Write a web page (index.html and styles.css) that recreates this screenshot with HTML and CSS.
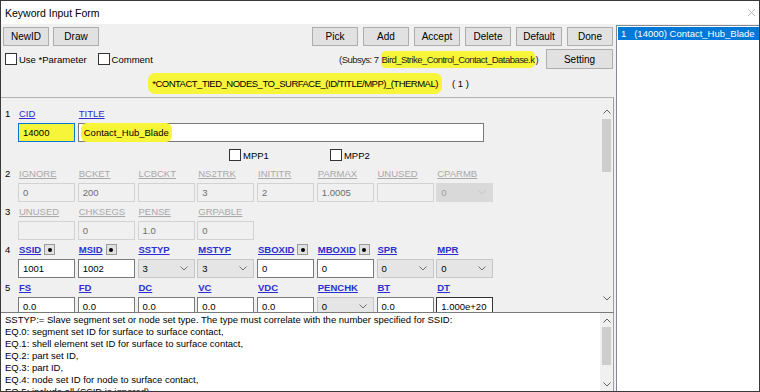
FILE: index.html
```html
<!DOCTYPE html>
<html lang="en">
<head>
<meta charset="UTF-8" />
<title>Keyword Input Form</title>
<link rel="stylesheet" href="styles.css">
</head>
<body>
<div class="window">
  <div class="titlebar">
    <span>Keyword Input Form</span>
    <svg class="close" width="9" height="9" viewBox="0 0 9 9"><path d="M1 1L8 8M8 1L1 8" stroke="#b8b8b8" stroke-width="1"/></svg>
  </div>

  <div class="content">
    <div class="main">
      <div class="toolbar">
        <div class="btn-group">
          <button class="btn">NewID</button>
          <button class="btn">Draw</button>
        </div>
        <div class="btn-group">
          <button class="btn">Pick</button>
          <button class="btn">Add</button>
          <button class="btn">Accept</button>
          <button class="btn">Delete</button>
          <button class="btn">Default</button>
          <button class="btn">Done</button>
        </div>
      </div>

      <div class="optrow">
        <label class="check use-param"><span class="cbox"></span>Use *Parameter</label>
        <label class="check"><span class="cbox"></span>Comment</label>
        <span class="subsys">(Subsys: 7 <span class="mark">Bird_Strike_Control_Contact_Database.k</span>)</span>
        <button class="btn btn-setting">Setting</button>
      </div>

      <div class="keyword">
        <span class="mark kw">*CONTACT_TIED_NODES_TO_SURFACE_(ID/TITLE/MPP)_(THERMAL)</span>
        <span class="count">( 1 )</span>
      </div>

      <div class="form">
        <div class="cards">
          <div class="row">
            <span class="num">1</span>
            <div class="fields">
              <div class="field">
                <div class="lbl"><span class="key">CID</span></div>
                <div class="box focus mark-box">14000</div>
              </div>
              <div class="field wide">
                <div class="lbl"><span class="key">TITLE</span></div>
                <div class="box"><span class="mark title-mark">Contact_Hub_Blade</span></div>
              </div>
            </div>
          </div>

          <div class="mpprow">
            <label class="check mpp1"><span class="cbox"></span>MPP1</label>
            <label class="check mpp2"><span class="cbox"></span>MPP2</label>
          </div>

          <div class="row">
            <span class="num">2</span>
            <div class="fields">
              <div class="field"><div class="lbl"><span class="key off">IGNORE</span></div><div class="box off">0</div></div>
              <div class="field"><div class="lbl"><span class="key off">BCKET</span></div><div class="box off">200</div></div>
              <div class="field"><div class="lbl"><span class="key off">LCBCKT</span></div><div class="box off"></div></div>
              <div class="field"><div class="lbl"><span class="key off">NS2TRK</span></div><div class="box off">3</div></div>
              <div class="field"><div class="lbl"><span class="key off">INITITR</span></div><div class="box off">2</div></div>
              <div class="field"><div class="lbl"><span class="key off">PARMAX</span></div><div class="box off">1.0005</div></div>
              <div class="field"><div class="lbl"><span class="key off">UNUSED</span></div><div class="box off"></div></div>
              <div class="field"><div class="lbl"><span class="key off">CPARMB</span></div>
                <div class="box select off-select">0<svg class="chev" width="8" height="5" viewBox="0 0 8 5"><path d="M0.5 0.5L4 4L7.5 0.5" fill="none" stroke="#c4c4c4"/></svg></div>
              </div>
            </div>
          </div>

          <div class="row">
            <span class="num">3</span>
            <div class="fields">
              <div class="field"><div class="lbl"><span class="key off">UNUSED</span></div><div class="box off"></div></div>
              <div class="field"><div class="lbl"><span class="key off">CHKSEGS</span></div><div class="box off">0</div></div>
              <div class="field"><div class="lbl"><span class="key off">PENSE</span></div><div class="box off">1.0</div></div>
              <div class="field"><div class="lbl"><span class="key off">GRPABLE</span></div><div class="box off">0</div></div>
            </div>
          </div>

          <div class="row">
            <span class="num">4</span>
            <div class="fields">
              <div class="field"><div class="lbl"><span class="key bold">SSID</span><span class="pick"></span></div><div class="box">1001</div></div>
              <div class="field"><div class="lbl"><span class="key bold">MSID</span><span class="pick"></span></div><div class="box">1002</div></div>
              <div class="field"><div class="lbl"><span class="key bold">SSTYP</span></div>
                <div class="box select">3<svg class="chev" width="8" height="5" viewBox="0 0 8 5"><path d="M0.5 0.5L4 4L7.5 0.5" fill="none" stroke="#707070"/></svg></div>
              </div>
              <div class="field"><div class="lbl"><span class="key bold">MSTYP</span></div>
                <div class="box select">3<svg class="chev" width="8" height="5" viewBox="0 0 8 5"><path d="M0.5 0.5L4 4L7.5 0.5" fill="none" stroke="#707070"/></svg></div>
              </div>
              <div class="field"><div class="lbl"><span class="key bold">SBOXID</span><span class="pick"></span></div><div class="box">0</div></div>
              <div class="field"><div class="lbl"><span class="key bold">MBOXID</span><span class="pick"></span></div><div class="box">0</div></div>
              <div class="field"><div class="lbl"><span class="key bold">SPR</span></div>
                <div class="box select">0<svg class="chev" width="8" height="5" viewBox="0 0 8 5"><path d="M0.5 0.5L4 4L7.5 0.5" fill="none" stroke="#707070"/></svg></div>
              </div>
              <div class="field"><div class="lbl"><span class="key bold">MPR</span></div>
                <div class="box select">0<svg class="chev" width="8" height="5" viewBox="0 0 8 5"><path d="M0.5 0.5L4 4L7.5 0.5" fill="none" stroke="#707070"/></svg></div>
              </div>
            </div>
          </div>

          <div class="row">
            <span class="num">5</span>
            <div class="fields">
              <div class="field"><div class="lbl"><span class="key bold">FS</span></div><div class="box">0.0</div></div>
              <div class="field"><div class="lbl"><span class="key bold">FD</span></div><div class="box">0.0</div></div>
              <div class="field"><div class="lbl"><span class="key bold">DC</span></div><div class="box">0.0</div></div>
              <div class="field"><div class="lbl"><span class="key bold">VC</span></div><div class="box">0.0</div></div>
              <div class="field"><div class="lbl"><span class="key bold">VDC</span></div><div class="box">0.0</div></div>
              <div class="field"><div class="lbl"><span class="key bold">PENCHK</span></div>
                <div class="box select">0<svg class="chev" width="8" height="5" viewBox="0 0 8 5"><path d="M0.5 0.5L4 4L7.5 0.5" fill="none" stroke="#707070"/></svg></div>
              </div>
              <div class="field"><div class="lbl"><span class="key bold">BT</span></div><div class="box">0.0</div></div>
              <div class="field"><div class="lbl"><span class="key bold">DT</span></div><div class="box dark">1.000e+20</div></div>
            </div>
          </div>
        </div>

        <div class="vscroll form-scroll">
          <svg class="arrow" width="8" height="5" viewBox="0 0 8 5"><path d="M0.5 4.5L4 1L7.5 4.5" fill="none" stroke="#606060"/></svg>
          <div class="thumb"></div>
          <div class="track"></div>
          <svg class="arrow" width="8" height="5" viewBox="0 0 8 5"><path d="M0.5 0.5L4 4L7.5 0.5" fill="none" stroke="#606060"/></svg>
        </div>
      </div>

      <div class="help">
        <div class="help-text">
          <div>SSTYP:= Slave segment set or node set type. The type must correlate with the number specified for SSID:</div>
          <div>EQ.0: segment set ID for surface to surface contact,</div>
          <div>EQ.1: shell element set ID for surface to surface contact,</div>
          <div>EQ.2: part set ID,</div>
          <div>EQ.3: part ID,</div>
          <div>EQ.4: node set ID for node to surface contact,</div>
          <div>EQ.5: include all (SSID is ignored),</div>
        </div>
        <div class="vscroll help-scroll">
          <svg class="arrow" width="8" height="5" viewBox="0 0 8 5"><path d="M0.5 4.5L4 1L7.5 4.5" fill="none" stroke="#606060"/></svg>
          <div class="thumb"></div>
          <div class="track"></div>
          <svg class="arrow" width="8" height="5" viewBox="0 0 8 5"><path d="M0.5 0.5L4 4L7.5 0.5" fill="none" stroke="#606060"/></svg>
        </div>
      </div>
    </div>

    <div class="list">
      <div class="item selected">1&nbsp;&nbsp;&nbsp;(14000) Contact_Hub_Blade</div>
    </div>
  </div>
</div>
</body>
</html>
```

FILE: styles.css
```css
* {
  box-sizing: border-box;
}

body {
  margin: 0;
  font-family: "Liberation Sans", Arial, sans-serif;
  font-size: 9.5px;
  color: #000;
  background: #fff;
}

.window {
  width: 760px;
  height: 392px;
  border: 1px solid #3a3a3a;
  display: flex;
  flex-direction: column;
  overflow: hidden;
}

/* Title bar */
.titlebar {
  height: 23px;
  flex: none;
  background: #fff;
  display: flex;
  align-items: center;
  justify-content: space-between;
  padding: 0 3px 0 4px;
  font-size: 10.5px;
}

.content {
  flex: 1;
  display: flex;
  background: #f0f0f0;
  min-height: 0;
}

.main {
  width: 615px;
  flex: none;
  display: flex;
  flex-direction: column;
}

/* Buttons */
.btn {
  font: inherit;
  font-size: 10px;
  height: 19px;
  width: 46px;
  padding: 0;
  background: #e1e1e1;
  border: 1px solid #adadad;
  color: #000;
}

.toolbar {
  height: 22px;
  flex: none;
  padding: 3px 3px 0 2px;
  display: flex;
  justify-content: space-between;
}

.btn-group {
  display: flex;
  gap: 4px;
}

.btn-group + .btn-group {
  gap: 5px;
}

/* Options row */
.optrow {
  height: 26px;
  flex: none;
  display: flex;
  align-items: center;
  padding: 0 3px 0 4px;
}

.check {
  display: flex;
  align-items: center;
  gap: 2px;
  margin-right: 14px;
}

.check.use-param {
  margin-right: 11px;
}

.cbox {
  width: 12px;
  height: 12px;
  background: #fff;
  border: 1px solid #333;
}

.subsys {
  margin-left: auto;
  margin-right: 8px;
  color: #222;
  letter-spacing: -0.55px;
}

.btn-setting {
  width: 67px;
  height: 20px;
}

.mark {
  background: #f7f53a;
  border-radius: 5px;
  padding: 3px 1px;
}

/* Keyword line */
.keyword {
  height: 25px;
  flex: none;
  display: flex;
  align-items: center;
  justify-content: center;
  gap: 10px;
  padding-bottom: 3px;
}

.kw {
  padding: 5px 4px;
  border-radius: 7px;
  letter-spacing: -0.5px;
}

/* Card form */
.form {
  height: 215px;
  flex: none;
  width: 613px;
  display: flex;
  border-top: 1px solid #b4b4b4;
  border-right: 1px solid #a0a0a0;
  overflow: hidden;
}

.cards {
  flex: 1;
  padding: 8px 0 0 4px;
}

.row {
  display: flex;
  margin-bottom: 2px;
}

.num {
  width: 13px;
  line-height: 15px;
}

.fields {
  display: grid;
  grid-template-columns: repeat(8, 57px);
  column-gap: 2.75px;
  row-gap: 0;
}

.field.wide {
  grid-column: 2 / span 7;
}

.field.wide .box {
  width: 406px;
}

.lbl {
  height: 15px;
  line-height: 15px;
  margin-bottom: 2px;
  display: flex;
  align-items: center;
  gap: 3px;
  padding-left: 1px;
}

.key {
  color: #2d2dd2;
  text-decoration: underline;
}

.key.bold {
  font-weight: bold;
}

.key.off {
  color: #a8a8a8;
}

.pick {
  width: 11px;
  height: 11px;
  background: #e1e1e1;
  border: 1px solid #9a9a9a;
  display: flex;
  align-items: center;
  justify-content: center;
}

.pick::after {
  content: "";
  width: 4px;
  height: 4px;
  border-radius: 50%;
  background: #000;
}

.box {
  height: 19px;
  background: #fff;
  border: 1px solid #7a7a7a;
  display: flex;
  align-items: center;
  padding-left: 4px;
  white-space: nowrap;
}

.box.focus {
  border-color: #0078d7;
}

.box.mark-box {
  background: #f7f53a;
}

.title-mark {
  padding: 4px 3px;
  margin-left: -2px;
  border-radius: 6px;
}

.box.off {
  background: #f0f0f0;
  border-color: #d2d2d2;
  color: #6d6d6d;
}

.box.dark {
  border-color: #333;
}

.box.select {
  background: #e5e5e5;
  border-color: #c6c6c6;
  justify-content: space-between;
  padding-right: 6px;
}

.box.off-select {
  background: #d9d9d9;
  border-color: #d9d9d9;
  color: #a0a0a0;
}

.mpprow {
  height: 14px;
  margin: 6px 0 4px;
  display: flex;
  align-items: center;
}

.mpp1 {
  margin-left: 224px;
}

.mpp2 {
  margin-left: 47px;
}

/* Scrollbars */
.vscroll {
  width: 13px;
  flex: none;
  display: flex;
  flex-direction: column;
  align-items: center;
  background: #f0f0f0;
}

.vscroll .arrow {
  margin: 5px 0;
}

.vscroll .thumb {
  width: 9px;
  background: #cdcdcd;
}

.vscroll .track {
  flex: 1;
}

.form-scroll {
  padding: 6px 0 6px;
}

.form-scroll .thumb {
  height: 53px;
}

.help {
  flex: 1;
  width: 613px;
  display: flex;
  background: #fff;
  border-top: 1px solid #7a7a7a;
  border-right: 1px solid #a0a0a0;
  overflow: hidden;
}

.help-text {
  flex: 1;
  padding: 1px 0 0 4px;
  line-height: 12px;
  font-size: 9.5px;
  white-space: nowrap;
}

.help-scroll {
  background: #f0f0f0;
}

.help-scroll .arrow {
  margin: 5px 0 4px;
}

.help-scroll .thumb {
  height: 38px;
}

/* Right list */
.list {
  flex: 1;
  margin-top: 1px;
  background: #fff;
  border-top: 1px solid #828790;
  border-left: 1px solid #828790;
  padding: 1px 0 0 1px;
}

.item {
  height: 13px;
  line-height: 13px;
  padding-left: 3px;
  white-space: nowrap;
}

.item.selected {
  background: #0078d7;
  color: #fff;
}
```
